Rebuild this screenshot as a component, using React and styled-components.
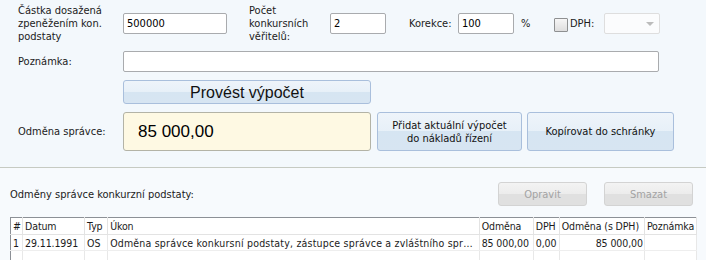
import React from "react";
import styled, { createGlobalStyle } from "styled-components";

const Global = createGlobalStyle`
  html, body {
    margin: 0;
    padding: 0;
    width: 706px;
    height: 260px;
    overflow: hidden;
    background: #f7fafd;
  }
  body {
    font-family: "DejaVu Sans Condensed", "DejaVu Sans", sans-serif;
    font-size: 11px;
    color: #1b1b1b;
  }
`;

const Top = styled.div`
  background: #f3f8fc;
  padding: 4px 0 0 18px;
  height: 163px;
  border-bottom: 1px solid #c6cac2;
`;

const Row = styled.div`
  display: flex;
  align-items: center;
  height: ${(p) => p.h}px;
  margin-top: ${(p) => p.mt || 0}px;
`;

const Label = styled.div`
  width: ${(p) => p.w}px;
  margin-left: ${(p) => p.ml || 0}px;
  line-height: 13px;
  flex: none;
`;

const Input = styled.div`
  box-sizing: border-box;
  width: ${(p) => p.w}px;
  height: 21px;
  flex: none;
  background: #fff;
  border: 1px solid #a9abae;
  border-radius: 2px;
  padding: 0 3px;
  display: flex;
  align-items: center;
  color: #000;
  font-size: 11px;
`;

const Check = styled.span`
  box-sizing: border-box;
  display: inline-block;
  width: 14px;
  height: 14px;
  margin-left: ${(p) => p.ml}px;
  margin-top: 3px;
  border: 1px solid #8e9091;
  border-radius: 1px;
  background: linear-gradient(#f6f6f6, #dedede);
  flex: none;
`;

const Select = styled.div`
  box-sizing: border-box;
  width: 56px;
  height: 21px;
  flex: none;
  border: 1px solid #dedede;
  border-radius: 2px;
  background: #fbfcfd;
  position: relative;
  &::after {
    content: "";
    position: absolute;
    right: 5px;
    top: 8px;
    border-left: 4px solid transparent;
    border-right: 4px solid transparent;
    border-top: 4px solid #bcbcbc;
  }
`;

const Button = styled.button`
  box-sizing: border-box;
  width: ${(p) => p.w}px;
  height: ${(p) => p.h}px;
  margin-left: ${(p) => p.ml || 0}px;
  flex: none;
  padding: 0;
  border: 1px solid #a9bfdc;
  border-radius: 3px;
  background: linear-gradient(#eef4fa 0%, #e7f0f8 50%, #d6e5f2 50%, #d7e5f2 100%);
  font-family: ${(p) =>
    p.big ? '"Liberation Sans", Arial, sans-serif' : '"DejaVu Sans Condensed", "DejaVu Sans", sans-serif'};
  font-size: ${(p) => (p.big ? 16 : 11)}px;
  line-height: 13px;
  color: #111;
  text-align: center;
`;

const Result = styled.div`
  box-sizing: border-box;
  width: 248px;
  height: 39px;
  flex: none;
  background: #fef9e3;
  border: 1px solid #b3b3a6;
  border-radius: 3px;
  display: flex;
  align-items: center;
  padding-left: 14px;
  font-family: "Liberation Sans", Arial, sans-serif;
  font-size: 17px;
  color: #000;
`;

const Bottom = styled.div`
  padding: 0 9px 0 10px;
`;

const Toolbar = styled.div`
  display: flex;
  align-items: center;
  height: 24px;
  margin-top: 14px;
  gap: 17px;
`;

const Caption = styled.div`
  flex: 1;
`;

const GrayButton = styled.button`
  box-sizing: border-box;
  width: 89px;
  height: 24px;
  padding: 0;
  border: 1px solid #d3d3d3;
  border-radius: 3px;
  background: linear-gradient(#f3f3f3 0%, #ececec 50%, #e0e0e0 50%, #e0e0e0 100%);
  font-family: "DejaVu Sans Condensed", "DejaVu Sans", sans-serif;
  font-size: 11px;
  color: #a3a3a3;
  margin-right: ${(p) => p.mr || 0}px;
`;

const Grid = styled.table`
  margin-top: 11px;
  width: 687px;
  border-collapse: collapse;
  table-layout: fixed;
  background: #fff;
  border: 1px solid #8c9096;
  border-bottom: none;
  font-size: 10.5px;
  letter-spacing: -0.1px;
`;

const Th = styled.th`
  font-weight: normal;
  text-align: left;
  height: 16px;
  padding: 0 0 0 2px;
  border-right: 1px solid #e3e3e3;
  border-bottom: 1px solid #e3e3e3;
  white-space: nowrap;
  overflow: hidden;
`;

const Td = styled.td`
  height: 15px;
  padding: 0 1px 0 2px;
  text-align: ${(p) => (p.right ? "right" : "left")};
  border-right: 1px solid #e8e8e8;
  border-bottom: 1px solid #eeeeee;
  white-space: nowrap;
  overflow: hidden;
  text-overflow: ${(p) => (p.ellipsis ? "ellipsis" : "clip")};
  letter-spacing: ${(p) => (p.ellipsis ? "0.2px" : "inherit")};
`;

const cols = [12, 62, 23, 371, 54, 26, 85, 52];
const heads = ["#", "Datum", "Typ", "Úkon", "Odměna", "DPH", "Odměna (s DPH)", "Poznámka"];

export default function App() {
  return (
    <>
      <Global />
      <Top>
        <Row h={39}>
          <Label w={105}>
            Částka dosažená
            <br />
            zpeněžením kon.
            <br />
            podstaty
          </Label>
          <Input w={104}>500000</Input>
          <Label w={81} ml={22}>
            Počet
            <br />
            konkursních
            <br />
            věřitelů:
          </Label>
          <Input w={56}>2</Input>
          <Label w={49} ml={23}>Korekce:</Label>
          <Input w={56}>100</Input>
          <Label w={12} ml={7}>%</Label>
          <Check ml={21} />
          <Label w={34} ml={2}>DPH:</Label>
          <Select />
        </Row>
        <Row h={21} mt={8}>
          <Label w={105}>Poznámka:</Label>
          <Input w={536} />
        </Row>
        <Row h={24} mt={8}>
          <Button big w={248} h={24} ml={105}>
            Provést výpočet
          </Button>
        </Row>
        <Row h={39} mt={8}>
          <Label w={105}>Odměna správce:</Label>
          <Result>85 000,00</Result>
          <Button w={145} h={39} ml={6}>
            Přidat aktuální výpočet
            <br />
            do nákladů řízení
          </Button>
          <Button w={147} h={39} ml={5}>
            Kopírovat do schránky
          </Button>
        </Row>
      </Top>
      <Bottom>
        <Toolbar>
          <Caption>Odměny správce konkurzní podstaty:</Caption>
          <GrayButton>Opravit</GrayButton>
          <GrayButton mr={4}>Smazat</GrayButton>
        </Toolbar>
        <Grid>
          <colgroup>
            {cols.map((w, i) => (
              <col key={i} style={{ width: w }} />
            ))}
          </colgroup>
          <thead>
            <tr>
              {heads.map((h) => (
                <Th key={h}>{h}</Th>
              ))}
            </tr>
          </thead>
          <tbody>
            <tr>
              <Td>1</Td>
              <Td>29.11.1991</Td>
              <Td>OS</Td>
              <Td ellipsis>
                Odměna správce konkursní podstaty, zástupce správce a zvláštního správce
              </Td>
              <Td>85 000,00</Td>
              <Td>0,00</Td>
              <Td right>85 000,00</Td>
              <Td />
            </tr>
            <tr>
              {cols.map((w, i) => (
                <Td key={i} />
              ))}
            </tr>
          </tbody>
        </Grid>
      </Bottom>
    </>
  );
}
